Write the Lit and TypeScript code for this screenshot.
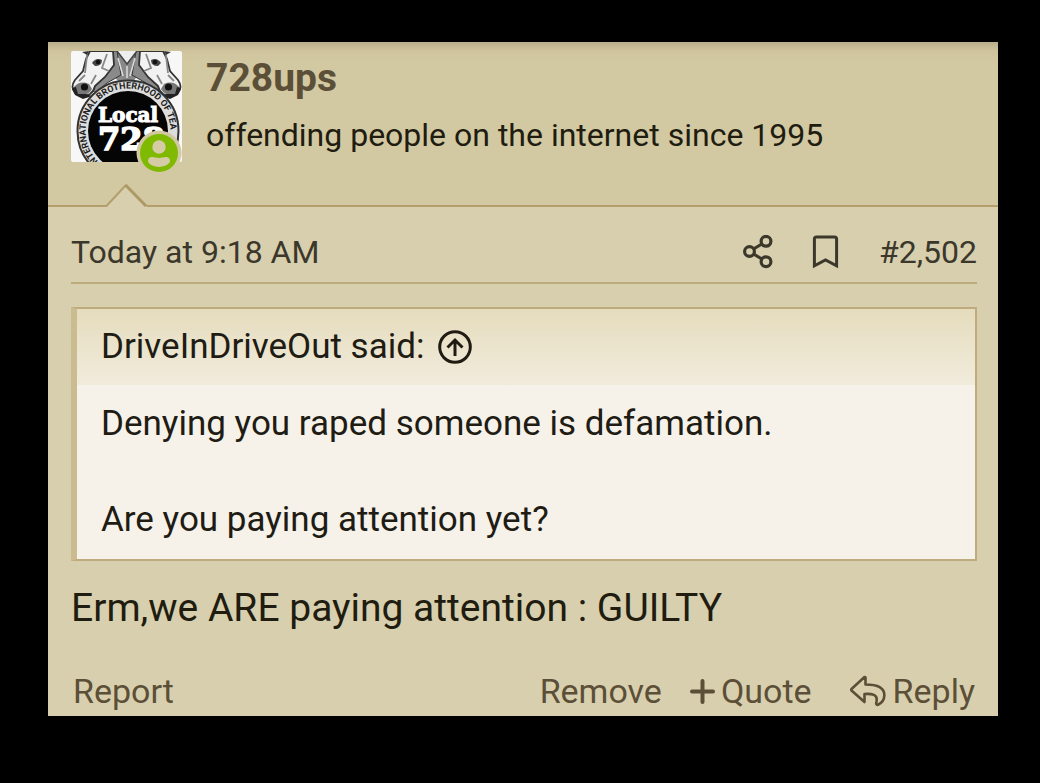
import { LitElement, html, css, svg } from "lit";
import { customElement, property } from "lit/decorators.js";

@customElement("user-avatar")
class UserAvatar extends LitElement {
  static styles = css`
    :host { display: block; position: relative; width: 111px; height: 111px; flex: none; }
    .picture { display: block; width: 100%; height: 100%; border-radius: 2px; }
    .online { position: absolute; right: 0; bottom: -14px; width: 46px; height: 46px; }
    .ring { font: 700 9px Roboto, sans-serif; fill: #222; }
    .local { font: 700 20px "DejaVu Serif", serif; fill: #fff; stroke: #fff; stroke-width: 1; }
    .number { font: 700 32px "DejaVu Serif", serif; fill: #fff; stroke: #fff; stroke-width: 1.6; }
  `;

  private horse() {
    return svg`
      <path d="M38 0 L46 0 L50 24 L36 32 L24 42 L21 38 L35 20Z" fill="#8a8a8a" stroke="#333"/>
      <path d="M19 0 L15 8 L12 20 L4 29 Q-1 36 4 42 Q11 48 19 43 Q23 40 24 35 L34 26 L43 14 L42 0Z" fill="#f2f2f2" stroke="#333" stroke-width="1.800"/>
      <path d="M16 4 L14 22 M36 3 L31 17 L38 20 M25 24 L20 33 M14 24 L8 30" fill="none" stroke="#888" stroke-width="1.800"/>
      <path d="M21 12 Q25 6 31 9 Q31 15 24 15Z" fill="#444"/>
      <circle cx="27" cy="11" r="2.200" fill="#111"/>
      <path d="M3 36 Q9 29 18 33 L21 38 Q17 45 9 44 Q4 42 3 36Z" fill="#777"/>
      <circle cx="13.500" cy="36" r="3.600" fill="#111"/>
      <path d="M1 37 L5 36 L7 43 L15 43 L21 45 L12 48 L4 44Z" fill="#222"/>
      <path d="M16 4 L11 1 L18 0Z" fill="#333"/>`;
  }

  render() {
    return html`
      <svg class="picture" viewBox="0 0 111 111" role="img" aria-label="Local 728 avatar">
        <defs><path id="arc" d="M29 112 A42.500 42.500 0 1 1 85 112"/></defs>
        <rect width="111" height="111" fill="#f7f7f7"/>
        <path d="M35 0 L78 0 L71 18 L62 31 L48 31 L38 20Z" fill="#888"/>
        ${this.horse()}
        <g transform="translate(111 0) scale(-1 1)">${this.horse()}</g>
        <path d="M46 0 L56 13 L66 0" fill="#eee" stroke="#444" stroke-width="1.500"/>
        <path d="M47 7 L52 25 M64 7 L59 25 M56 15 V27" stroke="#ddd" stroke-width="1.500"/>
        <circle cx="57" cy="80" r="50.500" fill="#ddd" stroke="#333" stroke-width="2"/>
        <circle cx="57" cy="80" r="40" fill="#050505"/>
        <text class="ring"><textPath href="#arc">INTERNATIONAL BROTHERHOOD OF TEA</textPath></text>
        <text class="local" x="27" y="71">Local</text>
        <text class="number" x="27" y="99">728</text>
      </svg>
      <svg class="online" viewBox="0 0 46 46" role="img" aria-label="Online now">
        <circle cx="23" cy="23" r="22.500" fill="#d2c8a2"/>
        <circle cx="23" cy="23" r="19" fill="#7fba00"/>
        <circle cx="23" cy="17" r="6.700" fill="#d5cca6"/>
        <path d="M12 32 C12 24 19 28 23 28 S34 24 34 32 C29 38.500 17 38.500 12 32Z" fill="#d5cca6"/>
      </svg>`;
  }
}

@customElement("quote-block")
class QuoteBlock extends LitElement {
  @property() author = "";

  static styles = css`
    :host { display: block; }
    .quote { margin: 0; border: 2px solid #bfac7e; border-left: 6px solid #cbbb91; background: #f6f2ea; color: #201c14; font-size: 35px; }
    .title { display: flex; align-items: center; gap: 14px; padding: 0 24px; height: 76px; background: linear-gradient(#e5dcbd, #f1ebdc); }
    .jump { display: flex; color: inherit; }
    .jump svg { width: 34px; height: 34px; }
    .body { padding: 15px 24px; line-height: 48px; }
  `;

  render() {
    return html`
      <blockquote class="quote">
        <div class="title">
          <span>${this.author} said:</span>
          <a class="jump" href="#source" aria-label="Go to quoted post">
            <svg viewBox="0 0 34 34" fill="none" stroke="currentColor" stroke-width="3">
              <circle cx="17" cy="17" r="15.300"/>
              <path d="M17 26 V10 M9.500 17.500 L17 10 L24.500 17.500"/>
            </svg>
          </a>
        </div>
        <div class="body"><slot></slot></div>
      </blockquote>`;
  }
}

@customElement("app-root")
class AppRoot extends LitElement {
  static styles = css`
    :host { display: block; box-sizing: border-box; min-height: 100vh; padding: 42px 42px 67px 48px; background: #000; font-family: Roboto, sans-serif; font-size: 34px; line-height: 40px; color: #201c10; }
    a { color: inherit; text-decoration: none; }
    svg { flex: none; }
    .post { background: #d8cfae; }
    .user { position: relative; display: flex; gap: 24px; padding: 9px 23px 43px; border-bottom: 2px solid #b39f6c; background: linear-gradient(#b9af8b, #cfc49d 9px, #d2c8a2 20px, #d2c8a2); }
    .notch { position: absolute; left: 57px; bottom: -2px; width: 43px; height: 24px; }
    .name { margin: 6px 0 16px; font-size: 39px; line-height: 42px; font-weight: 700; color: #5c4f37; }
    .name a { display: block; }
    .tagline { margin: 0; font-size: 32px; }
    .content { padding: 0 21px 0 23px; }
    .meta { display: flex; align-items: center; padding: 25px 0 10px; border-bottom: 2px solid #bdab7e; font-size: 32px; color: #3b382b; }
    .tools { display: flex; align-items: center; margin-left: auto; }
    .tools a { display: flex; }
    .share { width: 30px; height: 34px; margin-right: 38px; }
    .bookmark { width: 28px; height: 34px; margin-right: 40px; }
    .quoted { margin-top: 23px; }
    .message { margin: 23px 0 0; font-size: 39px; line-height: 48px; }
    .actions { display: flex; align-items: center; padding: 39px 2px 5px; color: #5c4f37; }
    .actions a { display: flex; align-items: center; }
    .report { margin-right: auto; }
    .add { gap: 6px; margin: 0 38px 0 28px; }
    .add svg { width: 25px; height: 25px; }
    .reply { gap: 7px; }
    .reply svg { width: 36px; height: 32px; }
  `;

  render() {
    return html`
      <article class="post">
        <header class="user">
          <user-avatar></user-avatar>
          <div>
            <h4 class="name"><a href="#member">728ups</a></h4>
            <p class="tagline">offending people on the internet since 1995</p>
          </div>
          <svg class="notch" viewBox="0 0 43 24" aria-hidden="true">
            <path d="M0 24 L1 23 L21 2 L42 24Z" fill="#d8cfae"/>
            <path d="M0 23 H1.500 L21 2" fill="none" stroke="#b39f6c" stroke-width="2"/>
            <path d="M20.500 2 L41 23" fill="none" stroke="#ad9965" stroke-width="3"/>
          </svg>
        </header>
        <div class="content">
          <div class="meta">
            <a href="#post-2502"><time>Today at 9:18 AM</time></a>
            <div class="tools">
              <a href="#share" aria-label="Share">
                <svg class="share" viewBox="0 0 30 34" fill="none" stroke="currentColor" stroke-width="3.200">
                  <circle cx="6.500" cy="16.500" r="4.900"/><circle cx="23" cy="6.300" r="4.900"/><circle cx="23" cy="26.700" r="4.900"/>
                  <path d="M10.500 14 L18.800 9 M10.500 19 L18.800 24"/>
                </svg>
              </a>
              <a href="#bookmark" aria-label="Add bookmark">
                <svg class="bookmark" viewBox="0 0 28 34" fill="none" stroke="currentColor" stroke-width="3">
                  <path d="M3.400 30.800 V4 Q3.400 2 5.500 2 H23.500 Q25.600 2 25.600 4 V30.800 L14.500 25Z"/>
                </svg>
              </a>
              <a href="#post-2502">#2,502</a>
            </div>
          </div>
          <quote-block class="quoted" author="DriveInDriveOut">
            Denying you raped someone is defamation.<br><br>Are you paying attention yet?
          </quote-block>
          <p class="message">Erm,we ARE paying attention : GUILTY</p>
          <footer class="actions">
            <a class="report" href="#report">Report</a>
            <a href="#remove">Remove</a>
            <a class="add" href="#quote">
              <svg viewBox="0 0 25 25" aria-hidden="true"><path d="M12.500 2 V23 M2 12.500 H23" stroke="currentColor" stroke-width="4" stroke-linecap="round"/></svg>Quote
            </a>
            <a class="reply" href="#reply">
              <svg viewBox="0 0 36 32" fill="none" stroke="currentColor" stroke-width="2.600" stroke-linejoin="round" aria-hidden="true">
                <path d="M14.500 2 L1.500 14 Q1 15 1.500 15.500 L14.500 27 V19 C22 18.500 28 19.500 26.500 26.500 Q25.500 30.500 28 29.800 C33 27.500 34.500 23 34.300 19.500 C34 11.500 25 9.500 15.500 9.500 V2.500Z"/>
              </svg>Reply
            </a>
          </footer>
        </div>
      </article>`;
  }
}
